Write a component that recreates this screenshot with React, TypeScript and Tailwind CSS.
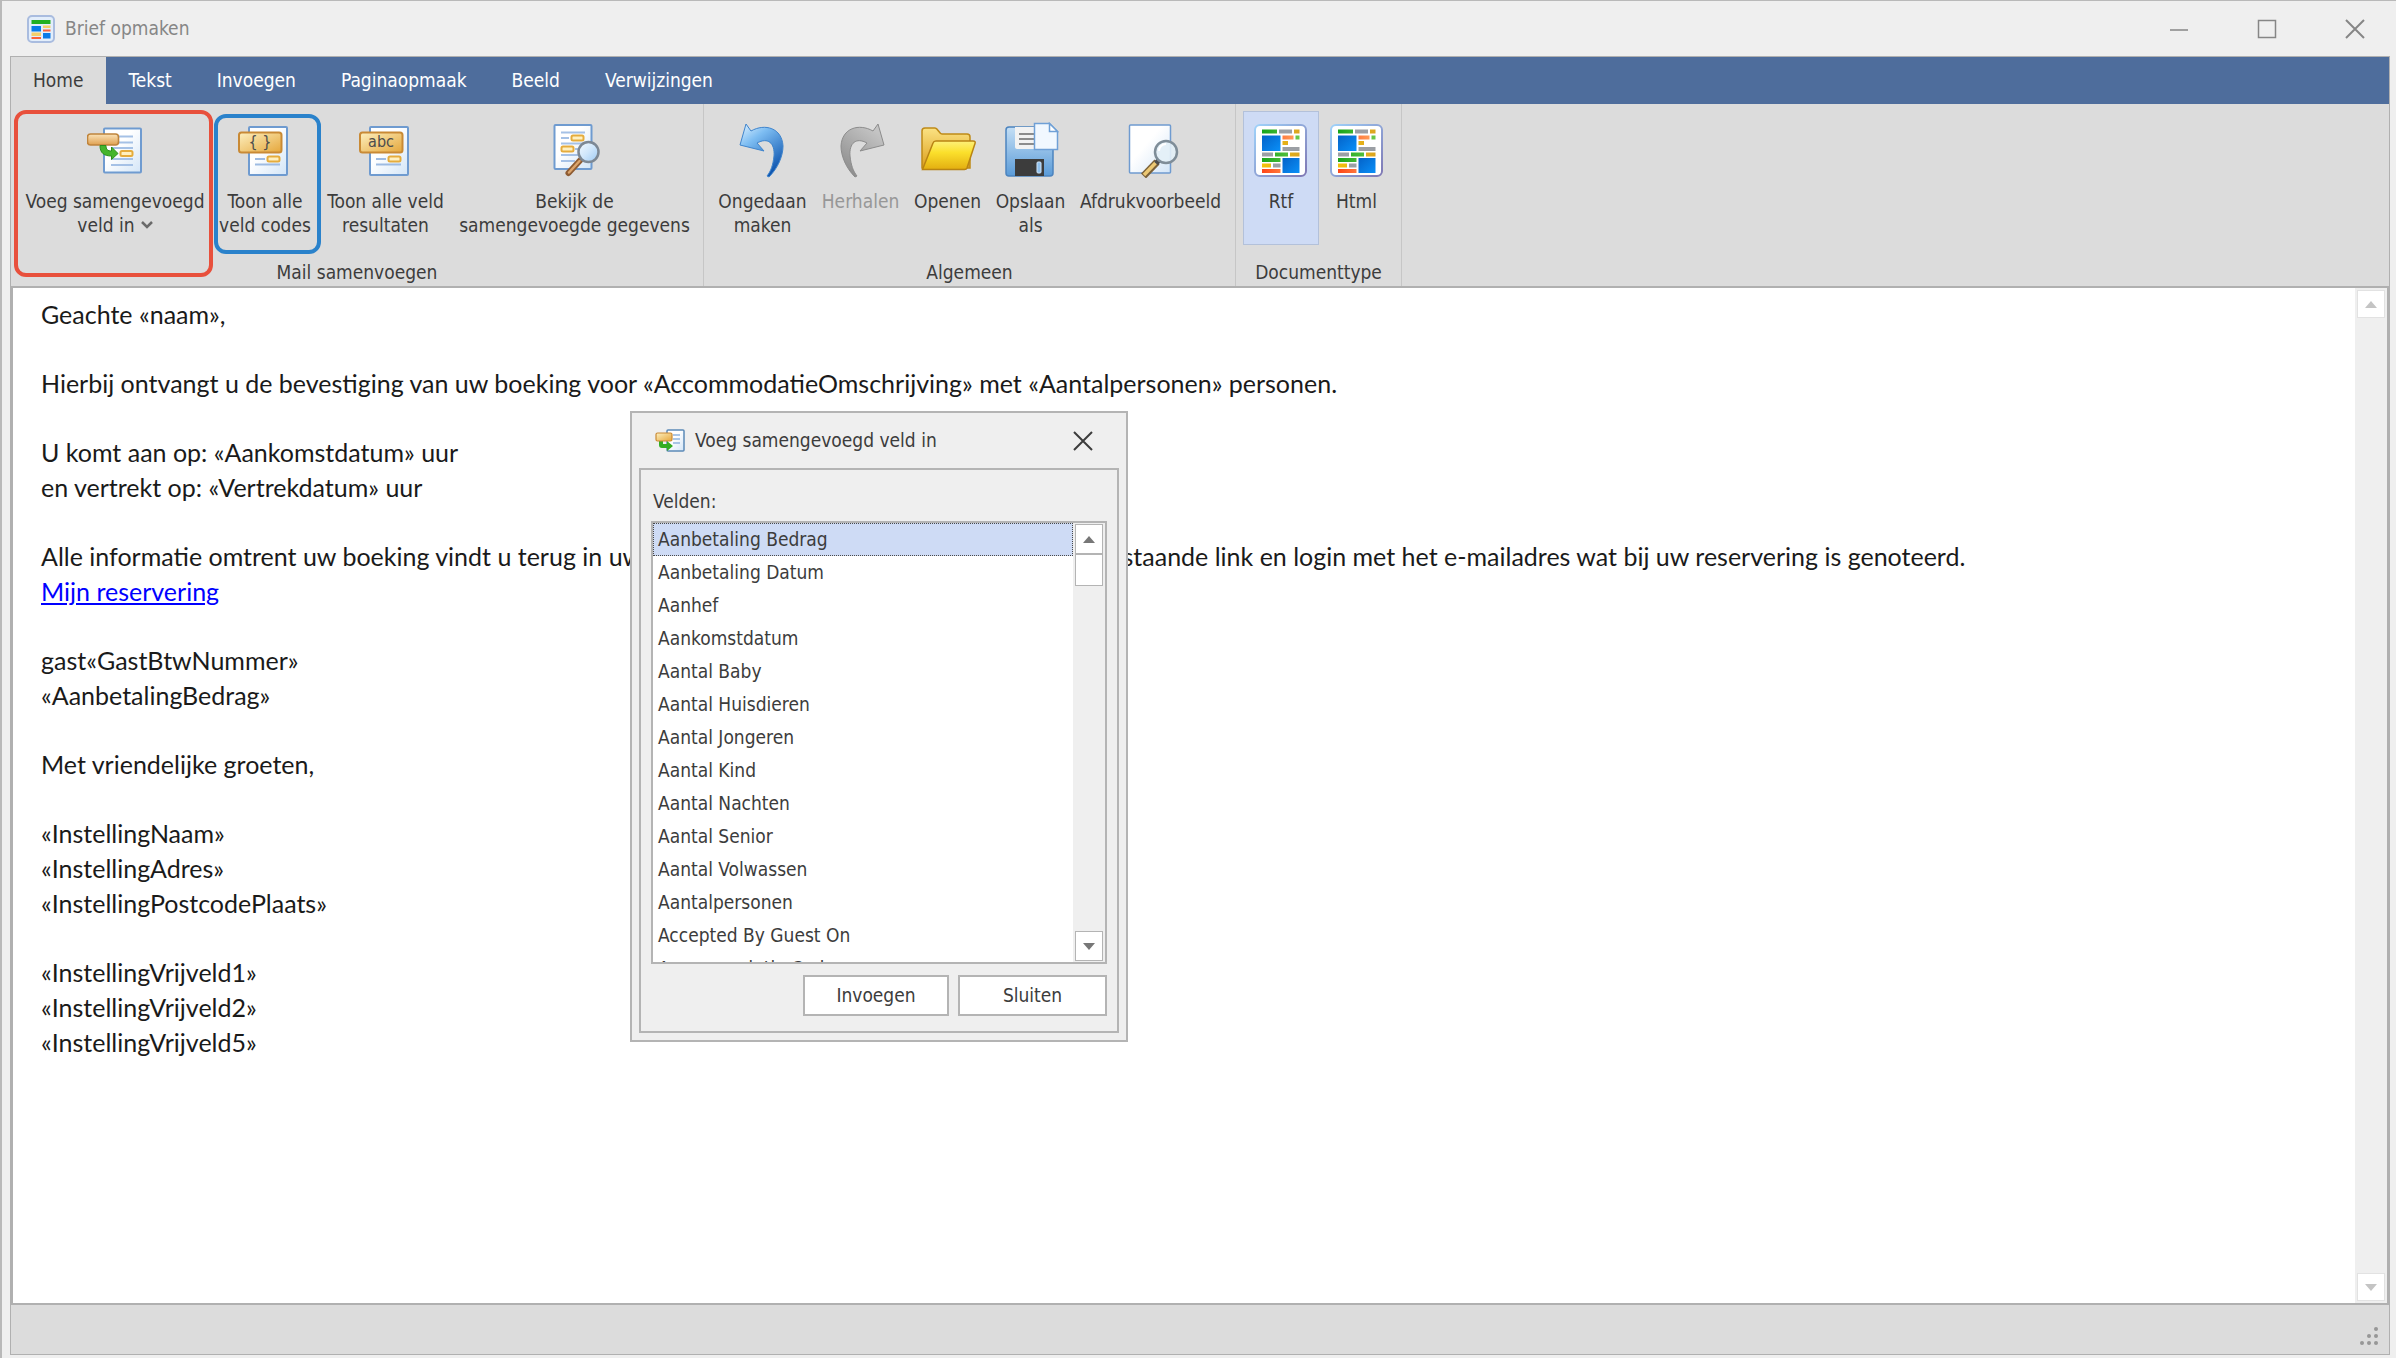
import { useState } from 'react';
import type { ReactNode } from 'react';
import clsx from 'clsx';

type IconProps = { className?: string };

type RibbonButtonProps = {
  icon: ReactNode;
  lines: string[];
  className: string;
  active?: boolean;
  disabled?: boolean;
  hasMenu?: boolean;
};

const TABS = ['Home', 'Tekst', 'Invoegen', 'Paginaopmaak', 'Beeld', 'Verwijzingen'];

const FIELDS = [
  'Aanbetaling Bedrag',
  'Aanbetaling Datum',
  'Aanhef',
  'Aankomstdatum',
  'Aantal Baby',
  'Aantal Huisdieren',
  'Aantal Jongeren',
  'Aantal Kind',
  'Aantal Nachten',
  'Aantal Senior',
  'Aantal Volwassen',
  'Aantalpersonen',
  'Accepted By Guest On',
  'Accommodatie Code',
];

const Gradients = () => (
  <svg className="absolute size-0" aria-hidden="true">
    <defs>
      <linearGradient id="paper" x1="0" y1="0" x2="1" y2="1">
        <stop offset="0.4" stopColor="#ffffff" />
        <stop offset="1" stopColor="#d3e5f7" />
      </linearGradient>
      <linearGradient id="tag" x1="0" y1="0" x2="1" y2="1">
        <stop offset="0" stopColor="#fdf0c0" />
        <stop offset="1" stopColor="#e5a63a" />
      </linearGradient>
      <linearGradient id="tagSmall" x1="0" y1="0" x2="0" y2="1">
        <stop offset="0" stopColor="#fbe3b8" />
        <stop offset="1" stopColor="#dfa050" />
      </linearGradient>
      <linearGradient id="lens" x1="0" y1="0" x2="1" y2="1">
        <stop offset="0" stopColor="#f4faff" />
        <stop offset="0.5" stopColor="#cfe6fb" />
        <stop offset="1" stopColor="#9cc9f3" />
      </linearGradient>
      <linearGradient id="undo" x1="0" y1="0" x2="0.6" y2="1">
        <stop offset="0" stopColor="#e2f3ff" />
        <stop offset="0.35" stopColor="#7dbdf2" />
        <stop offset="1" stopColor="#0f56b0" />
      </linearGradient>
      <linearGradient id="redo" x1="0.6" y1="0" x2="0" y2="1">
        <stop offset="0" stopColor="#c4c4c4" />
        <stop offset="1" stopColor="#858585" />
      </linearGradient>
      <linearGradient id="folder" x1="0" y1="0" x2="0" y2="1">
        <stop offset="0" stopColor="#fdf07a" />
        <stop offset="0.4" stopColor="#fbe02c" />
        <stop offset="1" stopColor="#e3ae10" />
      </linearGradient>
      <linearGradient id="folderBack" x1="0" y1="0" x2="0" y2="1">
        <stop offset="0" stopColor="#fbe283" />
        <stop offset="1" stopColor="#dc9f1c" />
      </linearGradient>
      <linearGradient id="disk" x1="0" y1="0" x2="0" y2="1">
        <stop offset="0" stopColor="#c5dff5" />
        <stop offset="1" stopColor="#5a9bd8" />
      </linearGradient>
      <linearGradient id="frame" x1="0" y1="0" x2="1" y2="1">
        <stop offset="0" stopColor="#9fd2fa" />
        <stop offset="1" stopColor="#7f78b4" />
      </linearGradient>
      <linearGradient id="block" x1="0" y1="0" x2="1" y2="1">
        <stop offset="0" stopColor="#0462c8" />
        <stop offset="1" stopColor="#0a90f8" />
      </linearGradient>
      <linearGradient id="green" x1="0" y1="0" x2="1" y2="0">
        <stop offset="0" stopColor="#17a51b" />
        <stop offset="1" stopColor="#6cc94a" />
      </linearGradient>
      <linearGradient id="red" x1="0" y1="0" x2="1" y2="0">
        <stop offset="0" stopColor="#ff4517" />
        <stop offset="1" stopColor="#ff9a55" />
      </linearGradient>
      <linearGradient id="yellow" x1="0" y1="0" x2="1" y2="0">
        <stop offset="0" stopColor="#f4c20c" />
        <stop offset="1" stopColor="#dba520" />
      </linearGradient>
    </defs>
  </svg>
);

const FieldMark = ({ x, y }: { x: number; y: number }) => (
  <rect x={x} y={y} width="12" height="5" rx="1.5" fill="#fff0c0" stroke="#e5ac3c" strokeWidth="2" />
);

const InsertFieldIcon = () => (
  <svg viewBox="0 0 56 56" className="size-14">
    <rect x="17" y="6.5" width="37" height="44" rx="1" fill="url(#paper)" stroke="#6f9bd0" strokeWidth="2" />
    <path d="M24 14.5h22M24 20.5h22M24 26h22M24 37h22M24 43h22" stroke="#a5c1e6" strokeWidth="2" />
    <FieldMark x={33.5} y={29} />
    <rect x="0.5" y="12" width="31" height="11" rx="3" fill="url(#tagSmall)" stroke="#bf843c" strokeWidth="1.6" />
    <path
      d="M13 23.5h6c0 4 1.5 5.5 5.5 5.5v-4l6.5 6.500-6.500 6v-3.500C17 34 13 31 13 23.500z"
      fill="#45b52c"
      stroke="#2c8f1c"
    />
  </svg>
);

const FieldCodeIcon = ({ label }: { label: string }) => (
  <svg viewBox="0 0 56 56" className="size-14">
    <rect x="12" y="5" width="38" height="48" rx="1" fill="url(#paper)" stroke="#6f9bd0" strokeWidth="2" />
    <path d="M18 37h10M18 42.5h25" stroke="#9dbbe2" strokeWidth="2" />
    <FieldMark x={30.5} y={34.5} />
    <rect x="2" y="10.5" width="42.5" height="20" rx="2.5" fill="url(#tag)" stroke="#c98a35" strokeWidth="2" />
    <text x="23" y="25" textAnchor="middle" fontSize="16" fill="#4d4d4d">
      {label}
    </text>
  </svg>
);

const PreviewDataIcon = () => (
  <svg viewBox="0 0 56 56" className="size-14">
    <rect x="7.5" y="3" width="37" height="44" rx="1" fill="url(#paper)" stroke="#6f9bd0" strokeWidth="2" />
    <path
      d="M14 10.5h24M14 16h8M14 21.5h24M28 27h8M14 33h20M14 39h14"
      stroke="#a5c1e6"
      strokeWidth="2"
    />
    <FieldMark x={24.5} y={13.5} />
    <FieldMark x={14.5} y={24.5} />
    <path d="M33 38.5 21.5 51" stroke="#8f5c32" strokeWidth="6" strokeLinecap="round" />
    <path d="M32.5 39 22 50.5" stroke="#dca56c" strokeWidth="2.5" strokeLinecap="round" />
    <circle cx="41.5" cy="30" r="10" fill="url(#lens)" stroke="#7d8894" strokeWidth="2.5" />
  </svg>
);

const UndoIcon = () => (
  <svg viewBox="0 0 56 56" className="size-14">
    <path
      d="M11 2 5 23l24 6-7-8c11-6 18 0 17 13-1 9-3 15-7 20l2 1c9-9 14-21 14-31C47 6 30 1 16 9z"
      fill="url(#undo)"
      stroke="#3f84cc"
    />
  </svg>
);

const RedoIcon = () => (
  <svg viewBox="0 0 56 56" className="size-14">
    <path
      d="M45 2l6 21-24 6 7-8c-11-6-18 0-17 13 1 9 3 15 7 20l-2 1C13 46 8 34 8 24 9 6 26 1 40 9z"
      fill="url(#redo)"
      stroke="#8c8c8c"
    />
  </svg>
);

const OpenIcon = () => (
  <svg viewBox="0 0 56 56" className="size-14">
    <path
      d="M2 46V9c0-2 1-3 3-3h10c3 0 4 6 7 6h25c2 0 3 1 3 3v31z"
      fill="url(#folderBack)"
      stroke="#bf8a17"
      strokeWidth="1.5"
    />
    <path
      d="M2.5 47.5 13 21c.5-1.5 1.5-2 3-2h37c2 0 2.5 1 2 2.5L47 46c-.5 1.2-1.2 1.5-2.5 1.5z"
      fill="url(#folder)"
      stroke="#b98413"
      strokeWidth="1.5"
    />
  </svg>
);

const SaveAsIcon = () => (
  <svg viewBox="0 0 56 56" className="size-14">
    <path d="M6 5h41c2 0 3 1 3 3v43c0 2-1 3-3 3H6c-2 0-3-1-3-3V8c0-2 1-3 3-3z" fill="url(#disk)" stroke="#4c84bf" strokeWidth="1.5" />
    <path d="M12 5h29v22H14c-1 0-2-1-2-2z" fill="#f2f2f2" />
    <path d="M16 12h18M16 17h18M16 22h18" stroke="#8c8c8c" strokeWidth="1.8" />
    <path d="M12 37h29v17H12z" fill="#3c3c3c" />
    <rect x="34" y="40" width="4" height="11" rx="1" fill="#8fc0ec" stroke="#cfe4f8" />
    <path d="M31.5 1.5h15l8 8v18h-23z" fill="#f1f8ff" stroke="#6fa0d6" strokeWidth="1.5" />
    <path d="M46.5 1.5v8h8z" fill="#ffffff" stroke="#6fa0d6" strokeWidth="1.5" />
  </svg>
);

const PrintPreviewIcon = () => (
  <svg viewBox="0 0 56 56" className="size-14">
    <rect x="6.5" y="3" width="41" height="48" rx="1" fill="url(#paper)" stroke="#6f9bd0" strokeWidth="1.5" />
    <path d="M34 40 20.5 54" stroke="#7a6038" strokeWidth="7" />
    <path d="M33 40.5 21 53" stroke="#ecc873" strokeWidth="3.5" />
    <path d="m36 38-3 3.5" stroke="#4d4d4d" strokeWidth="5" />
    <circle cx="43" cy="30" r="11" fill="#e3eff7" fillOpacity="0.9" stroke="#7f8d98" strokeWidth="2.5" />
    <path d="M36 29c0-4 3-7 7-7" fill="none" stroke="#ffffff" strokeWidth="2" />
  </svg>
);

const DocumentTypeIcon = () => (
  <svg viewBox="0 0 56 56" className="size-14">
    <rect x="2" y="3" width="51" height="51" rx="5" fill="#ffffff" stroke="url(#frame)" strokeWidth="2" />
    <path d="M9 7.5h15v4H9zM42.5 13.5h4v4h-4zM22 30.5h13v4H22zM9 36h18.5v4H9z" fill="url(#green)" />
    <path d="M26 7.5h13v4H26zM29.5 25h17v4h-17zM9 30.5h11v4H9zM20 41.5h7.5v4H20z" fill="#9b9fa4" />
    <path d="M41 7.5h5.5v4H41zM29.5 19H35v4h-5.5zM37 30.5h9.5v4H37zM9 41.5h9v4H9z" fill="url(#yellow)" />
    <path d="M29.5 13.5h11v4h-11zM9 47h18.5v4H9z" fill="url(#red)" />
    <path d="M9 13.5h18.5V29H9z" fill="url(#block)" />
    <path d="M29.5 36h17v15h-17z" fill="url(#block)" />
  </svg>
);

const AppIcon = () => (
  <svg viewBox="0 0 28 28" className="size-7">
    <rect x="1" y="1" width="26" height="26" rx="4" fill="#e3eefb" stroke="#a9bcdf" strokeWidth="2" />
    <path d="M4.5 5h19v4h-19z" fill="#22b022" />
    <path d="M4.5 11H14v5.5H4.500zM16 18h7.5v5.5H16z" fill="#0a7be8" />
    <path d="M16 10.5h7.5V13H16zM4.5 17.5H14v3.5H4.500z" fill="#f5cf6a" />
    <path d="M16 14.5h7.5v2H16zM4.5 22H14v2H4.500z" fill="#fb6238" />
  </svg>
);

const DialogIcon = () => (
  <svg viewBox="0 0 30 24" className="h-6 w-[30px]">
    <rect x="12" y="1" width="17" height="21" rx="1" fill="url(#paper)" stroke="#5c8ab8" strokeWidth="1.5" />
    <path d="M18 6h7M18 10h7M18 14h7" stroke="#8fb4de" strokeWidth="1.5" />
    <path d="M4 12h4v3h4v-3l6 5-6 5v-3H7c-2 0-3-1-3-3z" fill="#33ad22" />
    <rect x="1" y="4" width="16" height="8" rx="1.5" fill="url(#tag)" stroke="#c98a35" strokeWidth="1.2" />
  </svg>
);

const CloseIcon = ({ className }: IconProps) => (
  <svg viewBox="0 0 20 20" className={clsx('size-5', className)}>
    <path d="m1 1 18 18M19 1 1 19" stroke="currentColor" strokeWidth="2" />
  </svg>
);

const Arrow = ({ up }: { up?: boolean }) => (
  <svg viewBox="0 0 12 7" className="h-[7px] w-3">
    <path d={up ? 'M0 7 6 0l6 7z' : 'M0 0h12L6 7z'} fill="currentColor" />
  </svg>
);

const RibbonButton = ({ icon, lines, className, active, disabled, hasMenu }: RibbonButtonProps) => (
  <button
    type="button"
    disabled={disabled}
    className={clsx(
      'flex h-[134px] shrink-0 flex-col items-center border pt-2.5 leading-6 whitespace-nowrap',
      active ? 'border-[#b3c1da] bg-[#cedbf5]' : 'border-transparent',
      disabled && 'text-[#979797]',
      className,
    )}
  >
    {icon}
    <span className="mt-[11px] flex flex-col items-center">
      {lines.map((line, i) => (
        <span key={line} className="flex items-center gap-1.5">
          {line}
          {hasMenu && i === lines.length - 1 && (
            <svg viewBox="0 0 12 8" className="h-2 w-3">
              <path d="m1 1 5 5 5-5" fill="none" stroke="#6a6a6a" strokeWidth="2.5" />
            </svg>
          )}
        </span>
      ))}
    </span>
  </button>
);

const RibbonGroup = ({ label, children }: { label: string; children: ReactNode }) => (
  <section className="flex flex-col items-center border-r border-[#c6c6c6] pt-[7px]">
    <div className="flex px-[7px]">{children}</div>
    <h2 className="mt-[15px] leading-6">{label}</h2>
  </section>
);

const Paragraph = ({ children }: { children: ReactNode }) => (
  <p className="mb-[34px] whitespace-pre-line">{children}</p>
);

const DocumentScrollbar = () => (
  <div className="flex w-8 shrink-0 flex-col items-center justify-between bg-[#efefef] py-0.5 text-[#c4c4c4]">
    <button type="button" aria-label="Omhoog" className="flex h-7 w-7 items-center justify-center border border-[#e2e2e2] bg-white">
      <Arrow up />
    </button>
    <button type="button" aria-label="Omlaag" className="flex h-7 w-7 items-center justify-center border border-[#e2e2e2] bg-white">
      <Arrow />
    </button>
  </div>
);

const InsertFieldDialog = () => {
  const [selected, setSelected] = useState(FIELDS[0]);

  return (
    <div
      role="dialog"
      aria-labelledby="dialog-title"
      className="absolute top-[410px] left-[628px] w-[498px] border-2 border-[#b4b4b4] bg-[#efefef] px-[7px] pb-[7px]"
    >
      <header className="flex h-[55px] items-center pr-[26px] pl-4">
        <DialogIcon />
        <h2 id="dialog-title" className="ml-2.5 flex-1">
          Voeg samengevoegd veld in
        </h2>
        <button type="button" aria-label="Sluiten">
          <CloseIcon className="text-[#3c3c3c]" />
        </button>
      </header>
      <div className="border-2 border-[#b4b4b4] px-2.5 pb-[15px]">
        <div id="fields-label" className="px-0.5 pt-[19px] pb-2 leading-6">
          Velden:
        </div>
        <div className="flex h-[443px] overflow-hidden border-2 border-[#b4b4b4] bg-white">
          <ul role="listbox" aria-labelledby="fields-label" className="min-w-0 flex-1">
            {FIELDS.map((field) => (
              <li
                key={field}
                role="option"
                aria-selected={field === selected}
                onClick={() => setSelected(field)}
                className={clsx(
                  'h-[33px] border px-1 leading-[31px]',
                  field === selected ? 'border-dotted border-[#4a4a4a] bg-[#cedbf5]' : 'border-transparent',
                )}
              >
                {field}
              </li>
            ))}
          </ul>
          <div className="flex w-8 flex-col items-center bg-[#efefef] py-px text-[#777]">
            <button type="button" aria-label="Omhoog" className="flex h-[30px] w-7 items-center justify-center border border-[#b4b4b4] bg-white">
              <Arrow up />
            </button>
            <div className="h-8 w-7 border border-[#b4b4b4] bg-white" />
            <button type="button" aria-label="Omlaag" className="mt-auto flex h-[30px] w-7 items-center justify-center border border-[#b4b4b4] bg-white">
              <Arrow />
            </button>
          </div>
        </div>
        <div className="mt-[11px] flex justify-end gap-[9px]">
          <button type="button" className="h-[41px] w-[146px] border-2 border-[#b4b4b4] bg-white">
            Invoegen
          </button>
          <button type="button" className="h-[41px] w-[149px] border-2 border-[#b4b4b4] bg-white">
            Sluiten
          </button>
        </div>
      </div>
    </div>
  );
};

const App = () => {
  const [activeTab, setActiveTab] = useState('Home');

  return (
    <div className="relative flex h-screen flex-col border-t border-l-2 border-[#b9b9b9] bg-[#efefef] pr-1.5 pb-[3px] pl-2 font-['DejaVu_Sans_Condensed','DejaVu_Sans',sans-serif] text-[19px] text-[#3c3c3c]">
      <Gradients />
      <header className="flex h-[55px] shrink-0 items-center pl-[17px] text-[#868686]">
        <AppIcon />
        <h1 className="ml-2.5 flex-1">Brief opmaken</h1>
        <div className="flex">
          <button type="button" aria-label="Minimaliseren" className="flex w-[88px] justify-center">
            <svg viewBox="0 0 20 20" className="size-5">
              <path d="M1 11h18" stroke="currentColor" strokeWidth="1.5" />
            </svg>
          </button>
          <button type="button" aria-label="Maximaliseren" className="flex w-[88px] justify-center">
            <svg viewBox="0 0 20 20" className="size-5">
              <rect x="1.5" y="1.5" width="17" height="17" fill="none" stroke="currentColor" strokeWidth="1.5" />
            </svg>
          </button>
          <button type="button" aria-label="Sluiten" className="mr-[-9px] flex w-[88px] justify-center">
            <CloseIcon />
          </button>
        </div>
      </header>

      <div className="flex min-h-0 flex-1 flex-col border border-[#b0b0b0]">
        <nav className="flex h-[47px] shrink-0 gap-px bg-[#4e6d9c] text-white">
          {TABS.map((tab) => (
            <button
              key={tab}
              type="button"
              onClick={() => setActiveTab(tab)}
              className={clsx('px-[22px]', tab === activeTab && 'bg-[#dcdcdc] text-[#3c3c3c]')}
            >
              {tab}
            </button>
          ))}
        </nav>

        <div className="flex h-[182px] shrink-0 bg-[#dcdcdc]">
          <RibbonGroup label="Mail samenvoegen">
            <div className="relative">
              <RibbonButton icon={<InsertFieldIcon />} lines={['Voeg samengevoegd', 'veld in']} hasMenu className="w-[194px]" />
              <span className="pointer-events-none absolute -top-px -right-px -left-1 h-[167px] rounded-xl border-4 border-[#e8503c]" />
            </div>
            <div className="relative">
              <RibbonButton icon={<FieldCodeIcon label="{ }" />} lines={['Toon alle', 'veld codes']} className="w-[106px]" />
              <span className="pointer-events-none absolute top-[3px] -right-[3px] left-0.5 h-[140px] rounded-xl border-4 border-[#2a82cb]" />
            </div>
            <RibbonButton icon={<FieldCodeIcon label="abc" />} lines={['Toon alle veld', 'resultaten']} className="w-[135px]" />
            <RibbonButton icon={<PreviewDataIcon />} lines={['Bekijk de', 'samengevoegde gegevens']} className="w-[243px]" />
          </RibbonGroup>
          <RibbonGroup label="Algemeen">
            <RibbonButton icon={<UndoIcon />} lines={['Ongedaan', 'maken']} className="w-[103px]" />
            <RibbonButton icon={<RedoIcon />} lines={['Herhalen']} disabled className="w-[93px]" />
            <RibbonButton icon={<OpenIcon />} lines={['Openen']} className="w-[81px]" />
            <RibbonButton icon={<SaveAsIcon />} lines={['Opslaan', 'als']} className="w-[85px]" />
            <RibbonButton icon={<PrintPreviewIcon />} lines={['Afdrukvoorbeeld']} className="w-[155px]" />
          </RibbonGroup>
          <RibbonGroup label="Documenttype">
            <RibbonButton icon={<DocumentTypeIcon />} lines={['Rtf']} active className="w-[76px]" />
            <RibbonButton icon={<DocumentTypeIcon />} lines={['Html']} className="w-[75px]" />
          </RibbonGroup>
        </div>

        <main className="flex min-h-0 flex-1 border-2 border-[#b0b0b0] bg-white">
          <article className="min-w-0 flex-1 overflow-hidden pt-[9px] pl-7 font-['Lato','Liberation_Sans',sans-serif] text-[25px] leading-[35px] text-[#1a1a1a]">
            <Paragraph>Geachte «naam»,</Paragraph>
            <Paragraph>
              Hierbij ontvangt u de bevestiging van uw boeking voor «AccommodatieOmschrijving» met «Aantalpersonen»
              personen.
            </Paragraph>
            <Paragraph>{'U komt aan op: «Aankomstdatum» uur\nen vertrekt op: «Vertrekdatum» uur'}</Paragraph>
            <Paragraph>
              Alle informatie omtrent uw boeking vindt u terug in uw persoonlijke omgeving. Klik nu via de onderstaande
              link en login met het e-mailadres wat bij uw reservering is genoteerd.
              <br />
              <a href="#reservering" className="text-[#0000ff] underline">
                Mijn reservering
              </a>
            </Paragraph>
            <Paragraph>{'gast«GastBtwNummer»\n«AanbetalingBedrag»'}</Paragraph>
            <Paragraph>Met vriendelijke groeten,</Paragraph>
            <Paragraph>{'«InstellingNaam»\n«InstellingAdres»\n«InstellingPostcodePlaats»'}</Paragraph>
            <Paragraph>{'«InstellingVrijveld1»\n«InstellingVrijveld2»\n«InstellingVrijveld5»'}</Paragraph>
          </article>
          <DocumentScrollbar />
        </main>

        <footer className="flex h-[49px] shrink-0 items-end justify-end bg-[#dcdcdc] pr-2.5 pb-2">
          <svg viewBox="0 0 20 20" className="size-5" fill="#979797">
            <circle cx="17" cy="3" r="2" />
            <circle cx="10" cy="10" r="2" />
            <circle cx="17" cy="10" r="2" />
            <circle cx="3" cy="17" r="2" />
            <circle cx="10" cy="17" r="2" />
            <circle cx="17" cy="17" r="2" />
          </svg>
        </footer>
      </div>

      <InsertFieldDialog />
    </div>
  );
};

export default App;
